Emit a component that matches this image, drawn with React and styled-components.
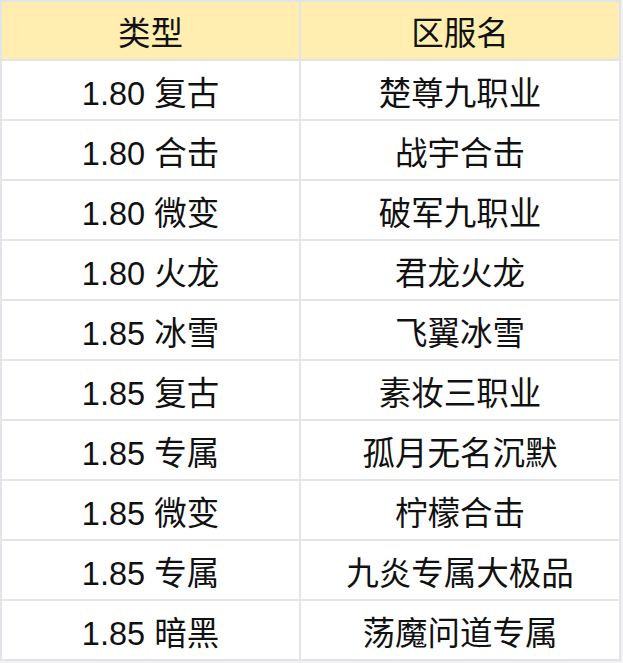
import React from 'react';
import styled, { createGlobalStyle } from 'styled-components';

const rows = [
  ['1.80 复古', '楚尊九职业'],
  ['1.80 合击', '战宇合击'],
  ['1.80 微变', '破军九职业'],
  ['1.80 火龙', '君龙火龙'],
  ['1.85 冰雪', '飞翼冰雪'],
  ['1.85 复古', '素妆三职业'],
  ['1.85 专属', '孤月无名沉默'],
  ['1.85 微变', '柠檬合击'],
  ['1.85 专属', '九炎专属大极品'],
  ['1.85 暗黑', '荡魔问道专属'],
];

const GlobalStyle = createGlobalStyle`
  body {
    margin: 0;
    background: #f1f1f4;
    font-family: "Liberation Sans", Arial, "Noto Sans CJK SC", sans-serif;
  }
`;

const Table = styled.table`
  width: 621px;
  border-collapse: collapse;
  background: #ffffff;
  color: #111111;
`;

const HeadCell = styled.th`
  height: 57px;
  padding: 0;
  border: 2px solid #e3e4e9;
  background: #ffeeb0;
  font-size: 32.5px;
  font-weight: 400;
  text-align: center;
  width: ${({ $w }) => $w}px;
`;

const Cell = styled.td`
  height: 58px;
  padding: 0;
  border: 2px solid #e3e4e9;
  font-size: 32.5px;
  text-align: center;
`;

const App = () => {
  return (
    <>
      <GlobalStyle />
      <Table>
        <thead>
          <tr>
            <HeadCell $w={297}>类型</HeadCell>
            <HeadCell $w={318}>区服名</HeadCell>
          </tr>
        </thead>
        <tbody>
          {rows.map(([type, name], i) => (
            <tr key={i}>
              <Cell>{type}</Cell>
              <Cell>{name}</Cell>
            </tr>
          ))}
        </tbody>
      </Table>
    </>
  );
};

export default App;
